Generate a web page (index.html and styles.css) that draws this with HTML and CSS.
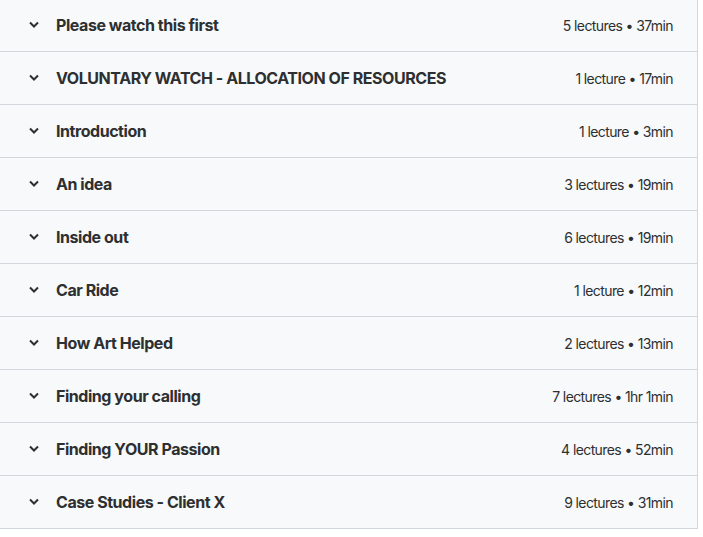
FILE: index.html
```html
<!DOCTYPE html>
<html lang="en">
<head>
  <meta charset="UTF-8" />
  <title>Course content</title>
  <link rel="stylesheet" href="styles.css">
</head>
<body>
  <div class="curriculum">
    <div class="section">
      <span class="chevron"><svg viewBox="0 0 12 8" width="12" height="8"><path d="M2 1.5 6 5.5l4-4" /></svg></span>
      <span class="title">Please watch this first</span>
      <span class="meta">5 lectures • 37min</span>
    </div>
    <div class="section">
      <span class="chevron"><svg viewBox="0 0 12 8" width="12" height="8"><path d="M2 1.5 6 5.5l4-4" /></svg></span>
      <span class="title">VOLUNTARY WATCH - ALLOCATION OF RESOURCES</span>
      <span class="meta">1 lecture • 17min</span>
    </div>
    <div class="section">
      <span class="chevron"><svg viewBox="0 0 12 8" width="12" height="8"><path d="M2 1.5 6 5.5l4-4" /></svg></span>
      <span class="title">Introduction</span>
      <span class="meta">1 lecture • 3min</span>
    </div>
    <div class="section">
      <span class="chevron"><svg viewBox="0 0 12 8" width="12" height="8"><path d="M2 1.5 6 5.5l4-4" /></svg></span>
      <span class="title">An idea</span>
      <span class="meta">3 lectures • 19min</span>
    </div>
    <div class="section">
      <span class="chevron"><svg viewBox="0 0 12 8" width="12" height="8"><path d="M2 1.5 6 5.5l4-4" /></svg></span>
      <span class="title">Inside out</span>
      <span class="meta">6 lectures • 19min</span>
    </div>
    <div class="section">
      <span class="chevron"><svg viewBox="0 0 12 8" width="12" height="8"><path d="M2 1.5 6 5.5l4-4" /></svg></span>
      <span class="title">Car Ride</span>
      <span class="meta">1 lecture • 12min</span>
    </div>
    <div class="section">
      <span class="chevron"><svg viewBox="0 0 12 8" width="12" height="8"><path d="M2 1.5 6 5.5l4-4" /></svg></span>
      <span class="title">How Art Helped</span>
      <span class="meta">2 lectures • 13min</span>
    </div>
    <div class="section">
      <span class="chevron"><svg viewBox="0 0 12 8" width="12" height="8"><path d="M2 1.5 6 5.5l4-4" /></svg></span>
      <span class="title">Finding your calling</span>
      <span class="meta">7 lectures • 1hr 1min</span>
    </div>
    <div class="section">
      <span class="chevron"><svg viewBox="0 0 12 8" width="12" height="8"><path d="M2 1.5 6 5.5l4-4" /></svg></span>
      <span class="title">Finding YOUR Passion</span>
      <span class="meta">4 lectures • 52min</span>
    </div>
    <div class="section">
      <span class="chevron"><svg viewBox="0 0 12 8" width="12" height="8"><path d="M2 1.5 6 5.5l4-4" /></svg></span>
      <span class="title">Case Studies - Client X</span>
      <span class="meta">9 lectures • 31min</span>
    </div>
  </div>
</body>
</html>
```

FILE: styles.css
```css
body { margin: 0; background: #fff; font-family: Inter, "Noto Sans", sans-serif; color: #2d2f31; }
.curriculum { width: 697px; margin: -2px 0 0 -1px; border: 1px solid #d1d7dc; }
.section { display: flex; align-items: center; height: 52px; padding: 0 24px 0 28px; background: #f7f9fa; border-bottom: 1px solid #d1d7dc; }
.section:last-child { border-bottom: none; }
.chevron { display: flex; width: 12px; margin-right: 16px; }
.chevron path { fill: none; stroke: #2d2f31; stroke-width: 2; }
.title { flex: 1; font-size: 16px; font-weight: 700; letter-spacing: -0.45px; }
.meta { font-size: 14px; letter-spacing: -0.6px; }
```
